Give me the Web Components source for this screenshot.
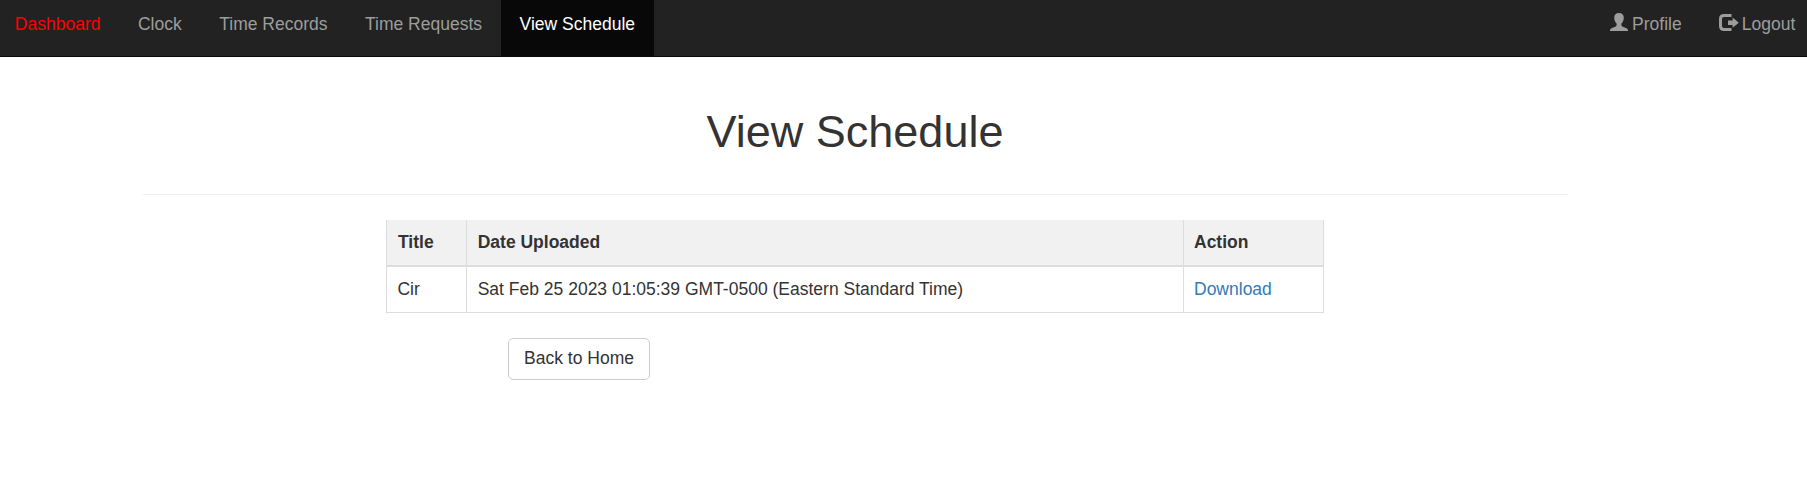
<!DOCTYPE html>
<html lang="en"><head><meta charset="utf-8"><title>View Schedule</title>
<style>body{margin:0;background:#fff;color:#333;font:17.5px/25px "Liberation Sans",Arial,sans-serif}</style></head>
<body>
<nav-bar>
<nav-item brand>Dashboard</nav-item><nav-item>Clock</nav-item><nav-item>Time Records</nav-item><nav-item>Time Requests</nav-item><nav-item active>View Schedule</nav-item>
<nav-item slot="right" icon="user">Profile</nav-item><nav-item slot="right" icon="logout">Logout</nav-item>
</nav-bar>
<schedule-page heading="View Schedule">
<schedule-table></schedule-table>
<link-button>Back to Home</link-button>
</schedule-page>
<script>
const icons={
user:'<svg width="18" height="18" viewBox="0 0 18 18" style="margin-right:4px;vertical-align:-1px"><path fill="currentColor" d="M9 0C12 0 13.8 2 13.8 4.8C13.8 7.2 12.8 9.3 11.4 10.6V12c0 .8.5 1.3 1.5 1.7l3.6 1.5c1.1.5 1.5 1.2 1.5 2.8H0c0-1.6.4-2.3 1.5-2.8l3.6-1.5c1-.4 1.5-.9 1.5-1.7v-1.4C5.2 9.3 4.2 7.2 4.2 4.8C4.2 2 6 0 9 0z"/></svg>',
logout:'<svg width="20" height="17" viewBox="0 0 20 17" style="margin-right:2.5px;vertical-align:-1px"><path fill="none" stroke="currentColor" stroke-width="3" d="M12.5 1.5H5Q1.5 1.5 1.5 5V12Q1.5 15.5 5 15.5H12.5"/><path fill="currentColor" d="M9 6.5h4.6V3.6L19.8 8.7L13.6 13.8V10.9H9z"/></svg>'};
const define=(name,html,setup)=>customElements.define(name,class extends HTMLElement{
connectedCallback(){if(this.shadowRoot)return;const r=this.attachShadow({mode:'open'});r.innerHTML=html;if(setup)setup(this,r)}});
define('nav-item','<style>:host{display:block;box-sizing:border-box;height:56px;padding:12px 18.75px 0;color:#9d9d9d;white-space:nowrap}:host([brand]){color:#f00}:host([active]){color:#fff;background:#080808}a{display:block;color:inherit}</style><a><span></span><slot></slot></a>',
(el,r)=>{r.querySelector('span').innerHTML=icons[el.getAttribute('icon')]||''});
define('nav-bar','<style>:host{display:block;background:#222;border-bottom:1px solid #080808;height:56px;overflow:hidden}nav{display:flex;justify-content:space-between}div{display:flex}.left{margin-left:-3.9px}.right{margin-right:-7px}</style><nav><div class="left"><slot></slot></div><div class="right"><slot name="right"></slot></div></nav>');
define('schedule-page','<style>:host{display:block;width:1425px;margin-left:143px}h1{margin:0 1px 0 0;padding-top:50px;font-size:45px;font-weight:400;line-height:50px;text-align:center}hr{height:1px;border:0;background:#eee;margin:37px 0 25px}</style><h1></h1><hr><slot></slot>',
(el,r)=>{r.querySelector('h1').textContent=el.getAttribute('heading')});
define('schedule-table','<style>:host{display:block;width:938px;margin-left:243px}.row{display:grid;grid-template-columns:80px 717px 141px;border-bottom:1px solid #ddd}.head{font-weight:700;background:#f1f1f1;border-bottom-width:2px}.row>div{height:45px;box-sizing:border-box;padding:10px;border-left:1px solid #ddd;line-height:25px}.row>div:last-child{border-right:1px solid #ddd}.row>div:nth-child(2){padding-left:10.7px}.head>div:first-child{padding-left:11px}.row:not(.head)>div:first-child{padding-left:10.4px}a{color:#337ab7}</style><div class="row head"><div>Title</div><div>Date Uploaded</div><div>Action</div></div><div class="row"><div>Cir</div><div>Sat Feb 25 2023 01:05:39 GMT-0500 (Eastern Standard Time)</div><div><a>Download</a></div></div>');
define('link-button','<style>:host{display:block;margin:25px 0 0 365px}button{width:142px;height:42px;padding:0 0 2px;background:#fff;border:1px solid #ccc;border-radius:5px;color:#333;font:inherit;display:block}</style><button><slot></slot></button>');
</script>
</body></html>
